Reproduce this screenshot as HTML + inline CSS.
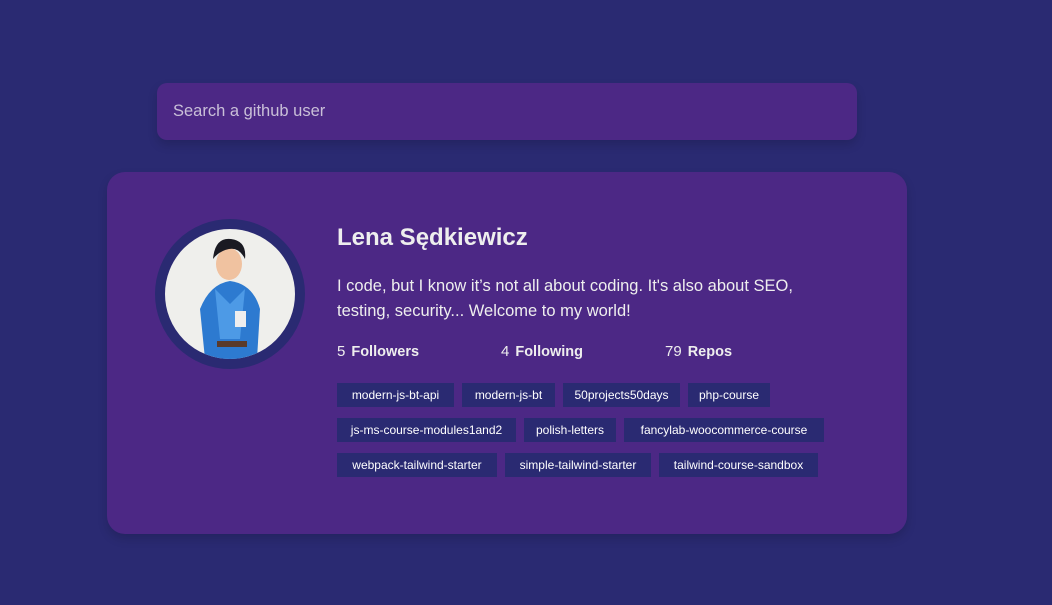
<!DOCTYPE html><html><head><style>
body{margin:0;width:1052px;height:605px;background:#2a2a72;font-family:"Liberation Sans",sans-serif;position:relative;overflow:hidden}
.s{position:absolute;left:157px;top:83px;width:700px;height:57px;background:#4c2885;border-radius:10px;box-shadow:0 5px 10px rgba(0,0,0,.15)}
.s span{position:absolute;left:16px;top:19px;font-size:16.5px;color:#c9bfd8}
.c{position:absolute;left:107px;top:172px;width:800px;height:362px;background:#4c2885;border-radius:18px;box-shadow:0 5px 10px rgba(0,0,0,.15)}
.av{position:absolute;left:155px;top:219px;width:130px;height:130px;border-radius:50%;border:10px solid #2a2a72;background:#efefec;overflow:hidden}
h2{position:absolute;left:337px;top:224px;margin:0;font-size:24px;color:#eee;font-weight:bold}
p{position:absolute;left:337px;top:274px;margin:0;width:490px;font-size:16.5px;line-height:25px;color:#eee}
.st{position:absolute;top:343px;font-size:15px;color:#eee}
.st b{margin-left:6px;font-size:14.5px}
.t{position:absolute;height:24px;line-height:24px;background:#2a2a72;color:#fff;font-size:12px;padding:0 4px;box-sizing:border-box;text-align:center;white-space:nowrap}
</style></head><body>
<div class="s"><span>Search a github user</span></div>
<div class="c"></div>
<div class="av"><svg width="130" height="130" viewBox="0 0 130 130">
<path d="M40 130 L35 80 Q45 55 65 52 Q88 55 95 80 L92 130Z" fill="#2d7ad0"/>
<path d="M50 60 L65 75 L80 60 L75 110 L55 110Z" fill="#4d9ae6"/>
<ellipse cx="64" cy="35" rx="13" ry="16" fill="#f0c2a0"/>
<path d="M48 30 Q50 8 66 10 Q82 12 80 30 Q74 18 64 20 Q54 22 48 30Z" fill="#1a1a22"/>
<rect x="70" y="82" width="11" height="16" fill="#eee"/>
<rect x="52" y="112" width="30" height="6" fill="#5a3a2a"/>
</svg></div>
<h2>Lena Sędkiewicz</h2>
<p>I code, but I know it’s not all about coding. It's also about SEO, testing, security... Welcome to my world!</p>
<div class="st" style="left:337px">5<b>Followers</b></div>
<div class="st" style="left:501px">4<b>Following</b></div>
<div class="st" style="left:665px">79<b>Repos</b></div>
<div class="t" style="left:337px;top:383px;width:117px">modern-js-bt-api</div>
<div class="t" style="left:462px;top:383px;width:93px">modern-js-bt</div>
<div class="t" style="left:563px;top:383px;width:117px">50projects50days</div>
<div class="t" style="left:688px;top:383px;width:82px">php-course</div>
<div class="t" style="left:337px;top:418px;width:179px">js-ms-course-modules1and2</div>
<div class="t" style="left:524px;top:418px;width:92px">polish-letters</div>
<div class="t" style="left:624px;top:418px;width:200px">fancylab-woocommerce-course</div>
<div class="t" style="left:337px;top:453px;width:160px">webpack-tailwind-starter</div>
<div class="t" style="left:505px;top:453px;width:146px">simple-tailwind-starter</div>
<div class="t" style="left:659px;top:453px;width:159px">tailwind-course-sandbox</div>
</body></html>
